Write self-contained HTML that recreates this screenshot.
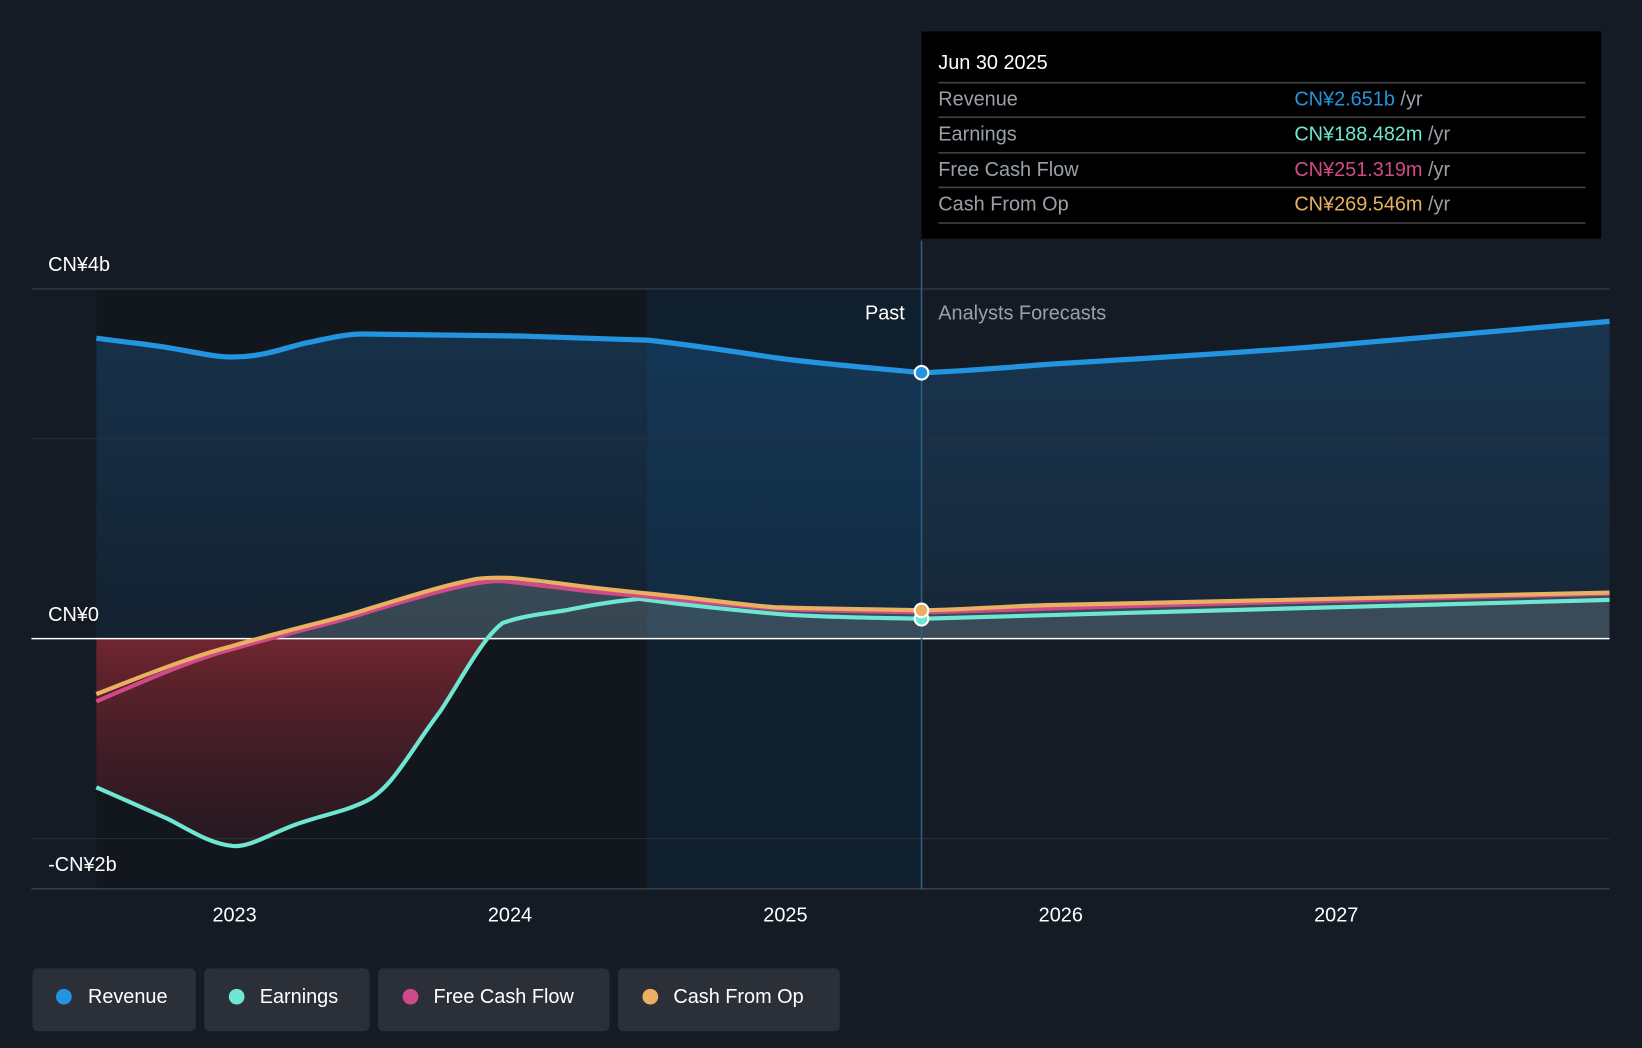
<!DOCTYPE html>
<html><head><meta charset="utf-8"><style>
html,body{margin:0;padding:0;background:#151b24;overflow:hidden}
svg{display:block}
text{font-family:"Liberation Sans",sans-serif}
</style></head><body>
<svg width="1642" height="1048" viewBox="0 0 1568 1001" preserveAspectRatio="none" xmlns="http://www.w3.org/2000/svg">
<defs>
<linearGradient id="rev" x1="0" y1="0" x2="0" y2="1"><stop offset="0" stop-color="#2378c0" stop-opacity="0.28"/><stop offset="1" stop-color="#2378c0" stop-opacity="0.12"/></linearGradient>
<linearGradient id="neg" x1="0" y1="0" x2="0" y2="1"><stop offset="0" stop-color="#8a2a35" stop-opacity="0.85"/><stop offset="1" stop-color="#4a1c26" stop-opacity="0.35"/></linearGradient>
<clipPath id="below"><rect x="0" y="610" width="1568" height="300"/></clipPath>
<clipPath id="above"><rect x="0" y="0" width="1568" height="610"/></clipPath>
</defs>
<rect width="1568" height="1001" fill="#151b24"/>
<rect x="92" y="276" width="526" height="573" fill="#12161d"/>
<rect x="618" y="276" width="262" height="573" fill="#0f1f2e"/>
<!-- revenue fill -->
<path d="M92,323 C130,328 150,330 160,332 C190,337 205,341 222,341 C250,341 270,333 290,328 C310,324 330,319 345,319 L500,321 C560,323 600,324 620,325 C680,332 720,339 750,343 C800,349 850,353 880,356 C930,354 960,351 1000,348 C1100,342 1200,336 1270,330 C1380,320 1460,313 1537,307 L1537,610 L92,610 Z" fill="url(#rev)"/>
<!-- negative fill: zero to earnings -->
<path clip-path="url(#below)" d="M92,600 L480,600 L480,595 C460,610 440,650 420,680 C390,720 375,755 350,765 C320,778 300,775 290,785 C260,795 240,810 222,808 C200,806 180,792 160,782 L92,752 Z" fill="url(#neg)"/>
<!-- positive fill: zero to CFO -->
<path clip-path="url(#above)" d="M92,663 C150,640 190,625 222,617 C280,600 320,592 350,582 C390,570 420,560 455,553 C470,551 480,552 488,552 C510,554 525,556 540,558 C570,562 600,565 620,567 C680,573 710,578 740,580 C800,582 850,582 880,583 C930,582 960,579 1000,578 C1200,573 1400,569 1537,566 L1537,640 L92,640 Z" fill="#8a9aa0" opacity="0.3"/>
<!-- grid -->
<line x1="30" y1="276" x2="1537" y2="276" stroke="#3a414b" stroke-width="1"/>
<line x1="30" y1="419" x2="1537" y2="419" stroke="#2a313b" stroke-width="1"/>
<line x1="30" y1="801" x2="1537" y2="801" stroke="#2a313b" stroke-width="1"/>
<line x1="30" y1="849" x2="1537" y2="849" stroke="#3a414b" stroke-width="1.5"/>
<line x1="30" y1="610" x2="1537" y2="610" stroke="#ffffff" stroke-width="1.5"/>
<line x1="880" y1="230" x2="880" y2="849" stroke="#2f5f80" stroke-width="1.5"/>
<!-- lines -->
<path d="M92,323 C130,328 150,330 160,332 C190,337 205,341 222,341 C250,341 270,333 290,328 C310,324 330,319 345,319 L500,321 C560,323 600,324 620,325 C680,332 720,339 750,343 C800,349 850,353 880,356 C930,354 960,351 1000,348 C1100,342 1200,336 1270,330 C1380,320 1460,313 1537,307" fill="none" stroke="#2394df" stroke-width="5"/>
<path d="M92,752 L160,782 C180,792 200,806 222,808 C240,810 265,792 290,785 C310,778 330,775 350,765 C375,752 390,720 420,680 C440,650 460,610 480,595 C500,588 520,586 540,583 C560,579 580,575 610,572 C640,576 700,583 750,587 C780,589 820,590 880,591 C1100,585 1350,577 1537,573" fill="none" stroke="#6ee6d2" stroke-width="4"/>
<path d="M92,670 C150,645 190,628 222,620 C280,603 320,595 350,585 C380,576 400,570 420,565 C450,557 465,555 480,555 C500,557 520,560 540,562 C570,566 600,568 620,570 C680,576 720,580 750,582 C800,584 850,584 880,585 C1100,578 1350,571 1537,567" fill="none" stroke="#d04a8a" stroke-width="4"/>
<path d="M92,663 C150,640 190,625 222,617 C280,600 320,592 350,582 C390,570 420,560 455,553 C470,551 480,552 488,552 C510,554 525,556 540,558 C570,562 600,565 620,567 C680,573 710,578 740,580 C800,582 850,582 880,583 C930,582 960,579 1000,578 C1200,573 1400,569 1537,566" fill="none" stroke="#e8b060" stroke-width="4"/>
<circle cx="880" cy="591" r="6.5" fill="#6ee6d2" stroke="#fff" stroke-width="2"/>
<circle cx="880" cy="583" r="6.5" fill="#e8b060" stroke="#fff" stroke-width="2"/>
<circle cx="880" cy="356" r="6.5" fill="#2394df" stroke="#fff" stroke-width="2"/>
<!-- labels -->
<text x="46" y="259" fill="#fff" font-size="19">CN¥4b</text>
<text x="46" y="593" fill="#fff" font-size="19">CN¥0</text>
<text x="46" y="832" fill="#fff" font-size="19">-CN¥2b</text>
<text x="864" y="305" fill="#fff" font-size="19" text-anchor="end">Past</text>
<text x="896" y="305" fill="#9aa0a8" font-size="19">Analysts Forecasts</text>
<g fill="#fff" font-size="19" text-anchor="middle">
<text x="224" y="880">2023</text><text x="487" y="880">2024</text><text x="750" y="880">2025</text><text x="1013" y="880">2026</text><text x="1276" y="880">2027</text>
</g>
<!-- tooltip -->
<rect x="880" y="30" width="649" height="198" fill="#000"/>
<text x="896" y="66" fill="#fff" font-size="19">Jun 30 2025</text>
<g stroke="#444" stroke-width="1.5">
<line x1="896" y1="79" x2="1514" y2="79"/><line x1="896" y1="112" x2="1514" y2="112"/><line x1="896" y1="146" x2="1514" y2="146"/><line x1="896" y1="179" x2="1514" y2="179"/><line x1="896" y1="213" x2="1514" y2="213"/>
</g>
<g font-size="19" fill="#9aa0a8">
<text x="896" y="101">Revenue</text><text x="896" y="134">Earnings</text><text x="896" y="168">Free Cash Flow</text><text x="896" y="201">Cash From Op</text>
</g>
<g font-size="19">
<text x="1236" y="101"><tspan fill="#2394df">CN¥2.651b</tspan><tspan fill="#9aa0a8"> /yr</tspan></text>
<text x="1236" y="134"><tspan fill="#6ee6d2">CN¥188.482m</tspan><tspan fill="#9aa0a8"> /yr</tspan></text>
<text x="1236" y="168"><tspan fill="#d04a8a">CN¥251.319m</tspan><tspan fill="#9aa0a8"> /yr</tspan></text>
<text x="1236" y="201"><tspan fill="#e8b060">CN¥269.546m</tspan><tspan fill="#9aa0a8"> /yr</tspan></text>
</g>
<!-- legend -->
<g font-size="19" fill="#fff">
<rect x="31" y="925" width="156" height="60" rx="5" fill="#2a2f38"/><circle cx="61" cy="952" r="7.5" fill="#2394df"/><text x="84" y="958">Revenue</text>
<rect x="195" y="925" width="158" height="60" rx="5" fill="#2a2f38"/><circle cx="226" cy="952" r="7.5" fill="#6ee6d2"/><text x="248" y="958">Earnings</text>
<rect x="361" y="925" width="221" height="60" rx="5" fill="#2a2f38"/><circle cx="392" cy="952" r="7.5" fill="#d04a8a"/><text x="414" y="958">Free Cash Flow</text>
<rect x="590" y="925" width="212" height="60" rx="5" fill="#2a2f38"/><circle cx="621" cy="952" r="7.5" fill="#e8b060"/><text x="643" y="958">Cash From Op</text>
</g>
</svg>
</body></html>
